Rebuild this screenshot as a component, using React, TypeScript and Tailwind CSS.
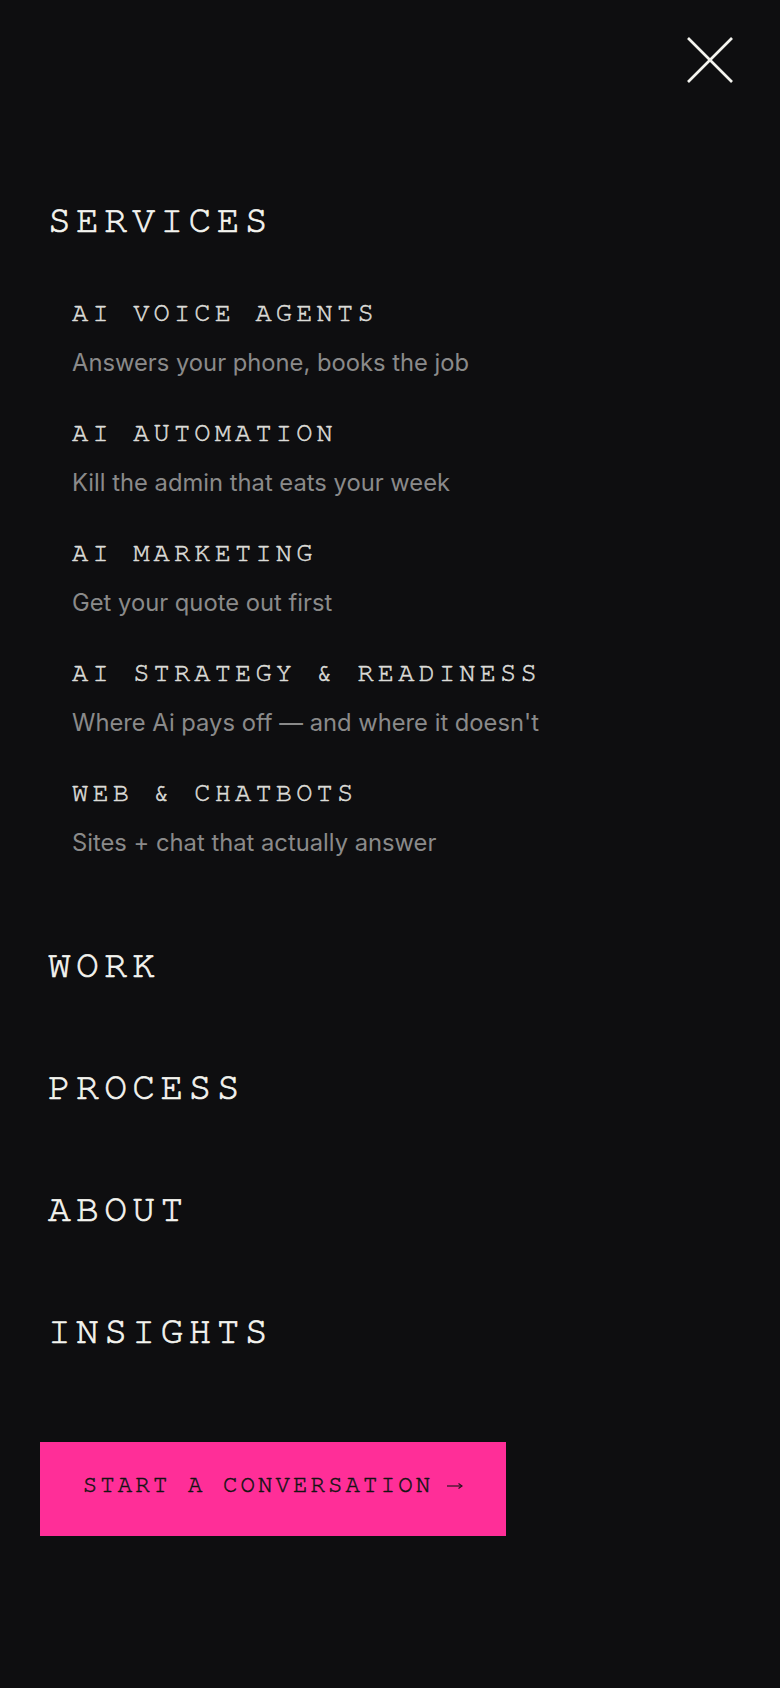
const services = [
  { title: 'AI VOICE AGENTS', desc: 'Answers your phone, books the job' },
  { title: 'AI AUTOMATION', desc: 'Kill the admin that eats your week' },
  { title: 'AI MARKETING', desc: 'Get your quote out first' },
  { title: 'AI STRATEGY & READINESS', desc: "Where Ai pays off \u2014 and where it doesn't" },
  { title: 'WEB & CHATBOTS', desc: 'Sites + chat that actually answer' },
];

const mainLinks = ['WORK', 'PROCESS', 'ABOUT', 'INSIGHTS'];

const mono = "font-['FreeMono','TeX_Gyre_Cursor','Courier_New',monospace]";

export default function App() {
  return (
    <div className="min-h-[1688px] w-full bg-[#0e0e10] font-['Inter',sans-serif]">
      <div className="flex justify-end pr-[47px] pt-[37px]">
        <button aria-label="Close menu" className="h-[46px] w-[46px] text-[#f4f4ef]">
          <svg viewBox="0 0 46 46" className="h-[46px] w-[46px]" fill="none" stroke="currentColor" strokeWidth="2.6">
            <line x1="1" y1="1" x2="45" y2="45" />
            <line x1="45" y1="1" x2="1" y2="45" />
          </svg>
        </button>
      </div>

      <nav className="flex flex-col pl-12">
        <div
          className={`${mono} mt-[118px] text-[38px] leading-[40px] tracking-[0.14em] text-[#f4f4ef] [-webkit-text-stroke:0.7px_#f4f4ef]`}
        >
          SERVICES
        </div>

        <div className="mt-[57px] flex flex-col gap-10 pl-6">
          {services.map((s) => (
            <div key={s.title} className="flex flex-col">
              <div
                className={`${mono} text-[27px] leading-[30px] tracking-[0.155em] text-[#dcdcd8] [-webkit-text-stroke:0.5px_#dcdcd8]`}
              >
                {s.title}
              </div>
              <div className="mt-5 text-[23.75px] leading-[30px] text-[#8a8a8a]">{s.desc}</div>
            </div>
          ))}
        </div>

        <div className="mt-[88px] flex flex-col gap-[82px]">
          {mainLinks.map((l) => (
            <div
              key={l}
              className={`${mono} text-[38px] leading-[40px] tracking-[0.14em] text-[#f4f4ef] [-webkit-text-stroke:0.7px_#f4f4ef]`}
            >
              {l}
            </div>
          ))}
        </div>
      </nav>

      <div className="mt-[90px] pl-10">
        <button
          className={`${mono} flex h-[94px] w-[466px] items-center justify-center bg-[#ff2e98] pb-2 text-[24px] tracking-[0.13em] text-[#141414] [-webkit-text-stroke:0.5px_#141414]`}
        >
          <span>START A CONVERSATION</span>
          <svg viewBox="0 0 16 8" className="ml-[14px] mt-[2px] h-2 w-4" fill="none" stroke="#2a1420" strokeWidth="1.2">
            <line x1="0" y1="4" x2="15" y2="4" />
            <path d="M11.5 1.5 L15 4 L11.5 6.5" />
          </svg>
        </button>
      </div>
    </div>
  );
}
